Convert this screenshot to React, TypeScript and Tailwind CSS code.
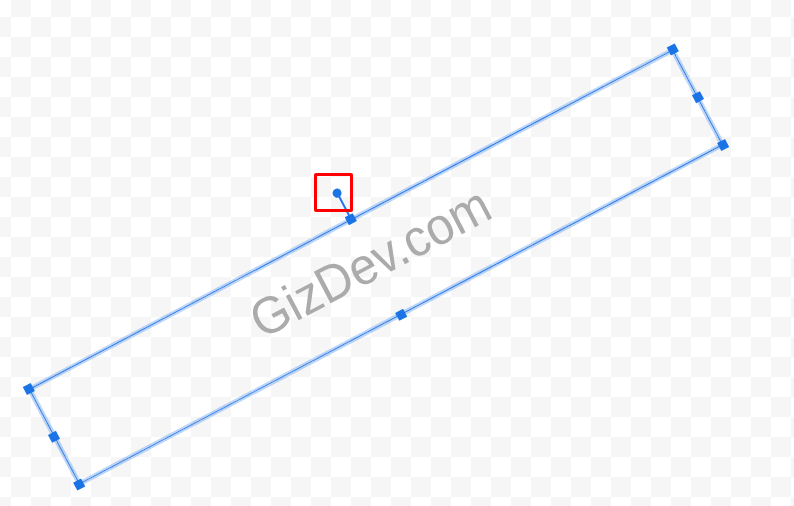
import React from "react";

// handle positions along the box, in percent
const handles = [
  { x: "0%", y: "0%" },
  { x: "50%", y: "0%" },
  { x: "100%", y: "0%" },
  { x: "100%", y: "50%" },
  { x: "100%", y: "100%" },
  { x: "50%", y: "100%" },
  { x: "0%", y: "100%" },
  { x: "0%", y: "50%" },
];

export default function App() {
  return (
    <div className="relative w-[794px] h-[506px] overflow-hidden bg-white [background-image:repeating-conic-gradient(#f6f6f6_0%_25%,#ffffff_0%_50%)] [background-size:40px_40px] [background-position:11px_17px]">
      {/* selected text box */}
      <div className="absolute left-[12px] top-[213px] w-[728px] h-[108px] rotate-[-27.8deg]">
        <div className="absolute inset-0 border-[1.5px] border-[#1f74e8] shadow-[0_0_0_2px_rgba(110,165,240,0.45),inset_0_0_0_2px_rgba(110,165,240,0.45)]" />
        <div className="absolute inset-0 flex items-center justify-center">
          <span className="text-[49px] leading-none text-[#ababab] font-['Liberation_Sans',Arial,sans-serif] -translate-x-[3px] -translate-y-[7px] scale-y-[1.06]">
            GizDev.com
          </span>
        </div>

        {/* rotate handle */}
        <div className="absolute left-1/2 -top-[30px] w-[1.5px] h-[30px] -translate-x-1/2 bg-[#1f74e8]" />
        <div className="absolute left-1/2 -top-[34px] w-[9px] h-[9px] -translate-x-1/2 rounded-full bg-[#1b74e6]" />

        {handles.map((h, i) => {
          const left = h.x === "0%" ? "left-0" : h.x === "50%" ? "left-1/2" : "left-full";
          const top = h.y === "0%" ? "top-0" : h.y === "50%" ? "top-1/2" : "top-full";
          return (
            <div
              key={i}
              className={`absolute ${left} ${top} w-[9px] h-[9px] -translate-x-1/2 -translate-y-1/2 bg-[#1b74e6]`}
            />
          );
        })}
      </div>

      {/* highlight box */}
      <div className="absolute left-[314px] top-[173px] w-[39px] h-[39px] border-[3px] border-[#ff0000] rounded-[2px]" />
    </div>
  );
}
